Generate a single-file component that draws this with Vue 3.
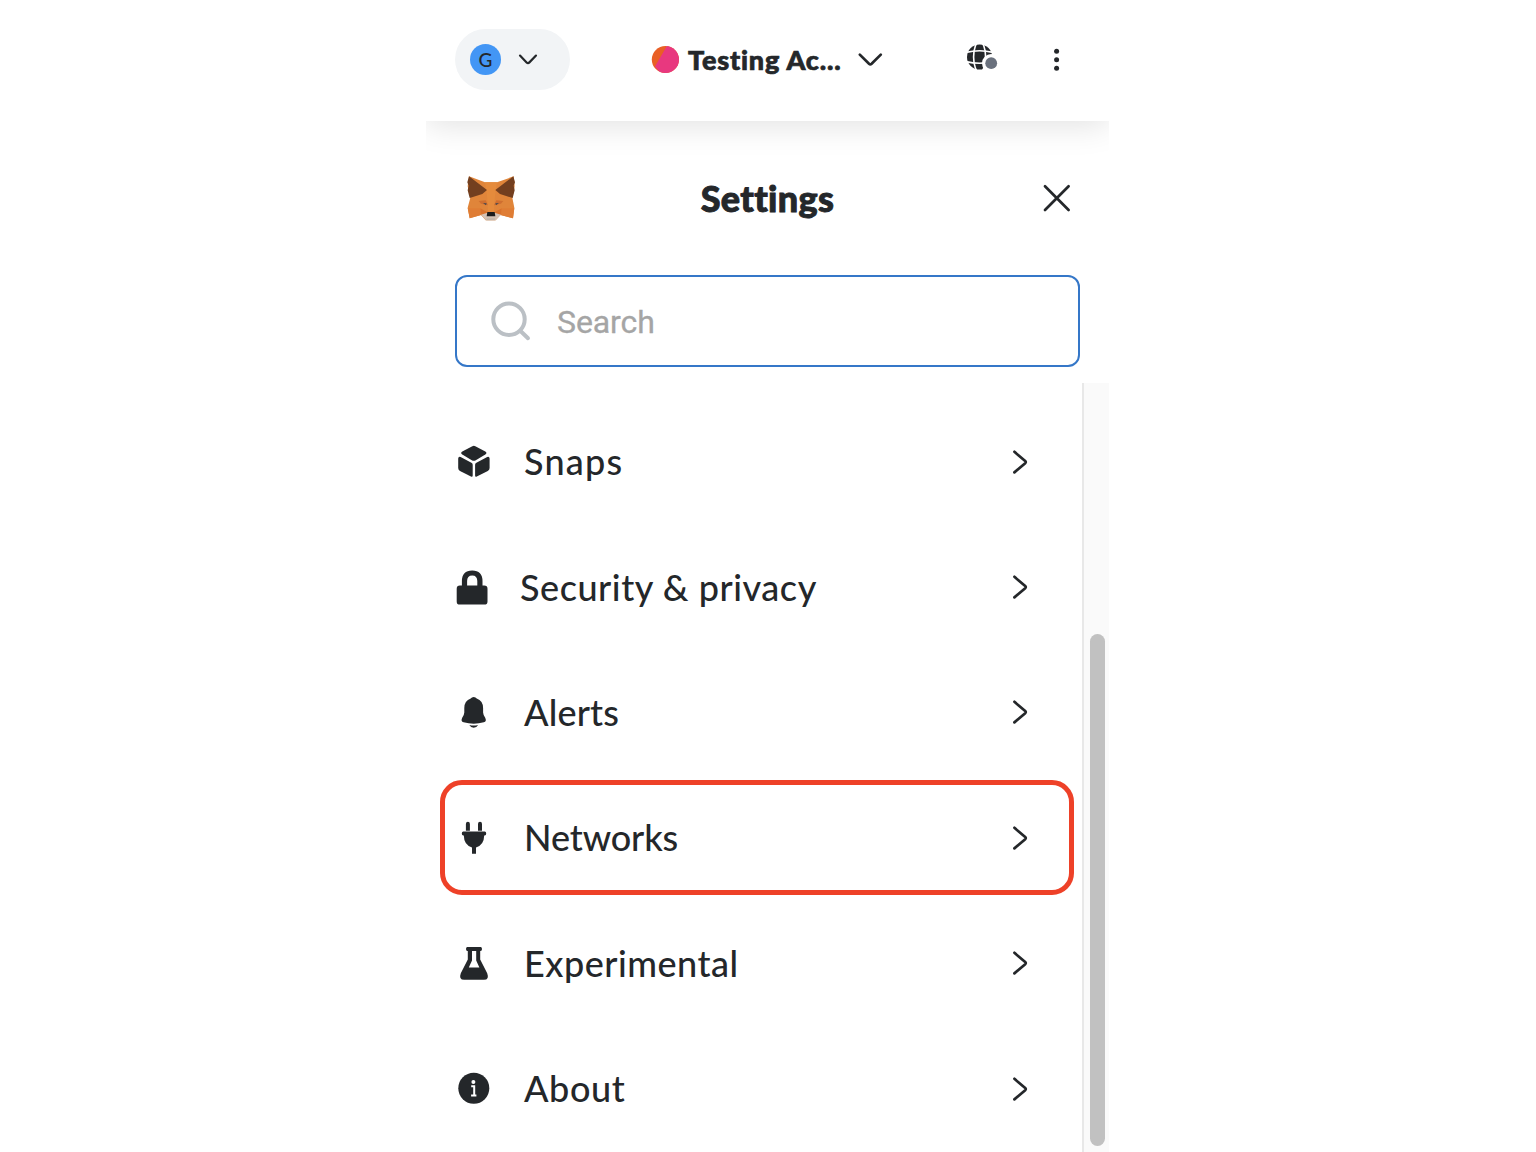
<script setup>
const items = [
  { id: 'snaps', label: 'Snaps' },
  { id: 'security', label: 'Security & privacy' },
  { id: 'alerts', label: 'Alerts' },
  { id: 'networks', label: 'Networks' },
  { id: 'experimental', label: 'Experimental' },
  { id: 'about', label: 'About' },
]
</script>

<template>
  <main class="popup">
    <header class="topbar">
      <button class="network">
        <span class="avatar">G</span>
        <svg class="net-chevron" width="20" height="14" viewBox="0 0 20 14"><path d="M2 2.6 L8.6 9.4 Q10 10.8 11.4 9.4 L18 2.6" /></svg>
      </button>
      <button class="account">
        <svg class="jazzicon" width="28" height="28" viewBox="0 0 28 28">
          <defs><clipPath id="disc"><circle cx="14.4" cy="13.5" r="13.6" /></clipPath></defs>
          <g clip-path="url(#disc)">
            <rect width="28" height="28" fill="#e95f25" />
            <path d="M17 -2 L4 20.5 L12 30 L30 30 L30 -2 Z" fill="#e8387f" />
          </g>
        </svg>
        <span class="account-name">Testing Ac...</span>
        <svg class="acc-chevron" width="26" height="16" viewBox="0 0 26 16"><path d="M2.8 2.6 L12 11.8 Q13.3 13 14.6 11.8 L23.8 2.6" /></svg>
      </button>
      <svg class="globe" width="34" height="30" viewBox="0 0 34 30">
        <circle cx="13.6" cy="14" r="12.6" fill="#24272a" />
        <g fill="none" stroke="#fff" stroke-width="1.6">
          <ellipse cx="13.6" cy="14" rx="6" ry="15.5" />
          <path d="M0 9.4 Q13.6 6 27 9.4 M0 18.6 Q13.6 22 27 18.6" />
        </g>
        <circle cx="25.2" cy="20.2" r="9.2" fill="#fff" />
        <circle cx="25.2" cy="20.2" r="5.9" fill="#6a717d" />
      </svg>
      <svg class="dots" width="8" height="26" viewBox="0 0 8 26" fill="#24272a">
        <circle cx="3.6" cy="4.2" r="2.5" /><circle cx="3.6" cy="12.7" r="2.5" /><circle cx="3.6" cy="21.2" r="2.5" />
      </svg>
    </header>

    <section class="title-row">
      <svg class="fox" width="48" height="46" viewBox="82 44 144 138">
        <path d="M88 48 L136 66 L172 66 L222 48 L225 78 L218 112 L224 142 L220 174 L182 164 L168 180 L138 180 L124 164 L90 174 L84 142 L92 112 L84 78 Z" fill="#e0853a" />
        <path d="M136 66 L172 66 L166 106 L163 154 L145 154 L142 106 Z" fill="#e58b3c" />
        <path d="M88 48 L142 89 L128 101 L90 113 L84 90 L87 76 L83 66 Z M221 48 L167 89 L181 101 L219 113 L225 90 L222 76 L226 66 Z" fill="#733f1f" />
        <path d="M84 144 L122 144 L124 164 L90 174 Z M224 144 L186 144 L184 164 L220 174 Z" fill="#df7d35" />
        <path d="M117 122 L138 120 L145 135 L124 130 Z M191 122 L170 120 L163 135 L184 130 Z" fill="#cf6f30" />
        <path d="M130 128 L141 129 L139 135 Z M178 128 L167 129 L169 135 Z" fill="#4a4a50" />
        <path d="M122 144 L142 155 L140 166 L124 164 Z M186 144 L166 155 L168 166 L184 164 Z" fill="#d9722c" />
        <path d="M124 163 L141 158 L167 158 L184 163 L168 180 L139 180 Z" fill="#d5c2b4" />
        <path d="M143 155 L165 155 L167 168 L141 168 Z" fill="#1c1c1c" />
        <path d="M141 174 L167 174 L166 180 L140 180 Z" fill="#c2b4a8" />
      </svg>
      <h1>Settings</h1>
      <svg class="close" width="30" height="30" viewBox="0 0 30 30"><path d="M3 3.2 L26.6 27 M26.6 3.2 L3 27" /></svg>
    </section>

    <label class="search">
      <svg width="44" height="44" viewBox="0 0 44 44"><circle cx="20" cy="20.3" r="15.7" /><path d="M31.5 32 L39 39.2" /></svg>
      <span>Search</span>
    </label>

    <div class="scroll">
      <nav class="list">
        <a v-for="item in items" :key="item.id" class="item" :class="item.id">
          <span class="icon">
            <svg v-if="item.id === 'snaps'" width="36" height="36" viewBox="0 0 36 36">
              <path d="M16.3 2.2 Q17.8 1.5 19.3 2.2 L29.3 7.5 Q31.6 9 29.3 10.5 L19.4 16.4 Q17.8 17.2 16.2 16.4 L6.3 10.5 Q4 9 6.3 7.5 Z" />
              <path d="M4.6 12.9 L15.4 18.8 Q16.7 19.5 16.7 20.8 V31.4 Q16.7 33.3 15 32.5 L4 27 Q2.2 26 2.2 24 V14.4 Q2.4 12 4.6 12.9 Z" />
              <path d="M31.2 12.9 L20.4 18.8 Q19.1 19.5 19.1 20.8 V31.4 Q19.1 33.3 20.8 32.5 L31.8 27 Q33.6 26 33.6 24 V14.4 Q33.4 12 31.2 12.9 Z" />
            </svg>
            <svg v-else-if="item.id === 'security'" width="36" height="36" viewBox="0 0 36 36">
              <path fill-rule="evenodd" d="M5.9 15.6 V11 Q5.9 .4 16.2 .4 Q26.5 .4 26.5 11 V15.6 H28.2 Q31.5 15.6 31.5 18.8 V31.4 Q31.5 34.6 28.2 34.6 H3.9 Q.7 34.6 .7 31.4 V18.8 Q.7 15.6 3.9 15.6 Z M11.1 15.6 H21.3 V11 Q21.3 5.4 16.2 5.4 Q11.1 5.4 11.1 11 Z" />
            </svg>
            <svg v-else-if="item.id === 'alerts'" width="36" height="36" viewBox="0 0 36 36">
              <path d="M17.7 1.9 Q19.7 1.9 20.7 3.4 Q27.1 5.6 27.1 13 V17.6 Q27.2 20 29.2 22.8 Q31 26.4 27.8 27.3 Q17.7 30.2 7.6 27.3 Q4.4 26.4 6.2 22.8 Q8.2 20 8.3 17.6 V13 Q8.3 5.6 14.7 3.4 Q15.7 1.9 17.7 1.9 Z M13.3 30 Q17.7 31 22.1 30 Q20.7 32.7 17.7 32.7 Q14.7 32.7 13.3 30 Z" />
            </svg>
            <svg v-else-if="item.id === 'networks'" width="36" height="36" viewBox="0 0 36 36">
              <path d="M9.9 10.8 V4 Q9.9 1.8 11.9 1.8 Q13.9 1.8 13.9 4 V10.8 Z M22 10.8 V4 Q22 1.8 24 1.8 Q26 1.8 26 4 V10.8 Z M7.3 11.5 H28.7 Q30.2 11.5 30.2 13.5 Q30.2 15.5 28.7 15.5 H28.2 Q28 25.2 20 27.4 V33.7 H16 V27.4 Q8 25.2 7.8 15.5 H7.3 Q5.8 15.5 5.8 13.5 Q5.8 11.5 7.3 11.5 Z" />
            </svg>
            <svg v-else-if="item.id === 'experimental'" width="36" height="36" viewBox="0 0 36 36">
              <path fill-rule="evenodd" d="M11.4 1.1 H24.6 Q26 1.1 26 3.1 Q26 5 24.6 5 H24.2 V13.6 L31.2 27.2 Q33.6 33.8 28 33.8 H8.2 Q2.4 33.8 4.8 27.2 L11.8 13.6 V5 H11.4 Q10 5 10 3.1 Q10 1.1 11.4 1.1 Z M16 5 V14.6 L12.8 21.6 H23.4 L20.2 14.6 V5 Z" />
            </svg>
            <svg v-else width="36" height="36" viewBox="0 0 36 36">
              <circle cx="17.8" cy="17.3" r="15.5" />
              <circle cx="17.4" cy="11" r="2" fill="#fff" />
              <path d="M15.2 15.3 H18.2 V25 M15.1 24.6 H20.4" fill="none" stroke="#fff" stroke-width="2" />
            </svg>
          </span>
          <span class="label">{{ item.label }}</span>
          <svg class="arrow" width="18" height="28" viewBox="0 0 18 28"><path d="M3.4 3.8 L14.2 13 Q15.4 14.1 14.2 15.2 L3.4 24.4" /></svg>
        </a>
      </nav>
      <div class="track"><div class="thumb"></div></div>
    </div>
  </main>
</template>

<style>
body { background: #fff; overflow: hidden; }
</style>

<style scoped>
.popup {
  display: flex;
  flex-direction: column;
  width: 683px;
  height: 1152px;
  margin-left: 426px;
  overflow: hidden;
  color: #24272a;
  font-family: Lato, "Liberation Sans", sans-serif;
  font-variant-ligatures: none;
}
svg { display: block; flex: none; overflow: visible; }
button { border: 0; padding: 0; background: none; color: inherit; font: inherit; }
.topbar {
  box-sizing: border-box;
  display: flex;
  flex: none;
  align-items: center;
  height: 121px;
  padding: 0 48px 2px 29px;
  box-shadow: 0 4px 31px rgba(0, 0, 0, .12);
}
.network {
  box-sizing: border-box;
  display: flex;
  align-items: center;
  width: 115px;
  height: 61px;
  padding-left: 15px;
  border-radius: 31px;
  background: #f2f4f6;
}
.avatar {
  width: 31px;
  height: 31px;
  border-radius: 50%;
  background: #4396f5;
  font: 500 19px/31px Lato, sans-serif;
  text-align: center;
}
.net-chevron { margin-left: 17px; }
.net-chevron path, .acc-chevron path, .arrow path, .close path {
  fill: none;
  stroke: #24272a;
  stroke-width: 2.2;
  stroke-linecap: round;
}
.account { display: flex; align-items: center; width: 232px; margin-left: 81px; }
.account-name {
  width: 171px;
  margin-left: 9px;
  font-size: 27px;
  font-weight: 900;
  line-height: 32px;
  letter-spacing: .82px;
  text-align: left;
  white-space: nowrap;
  -webkit-text-stroke: .7px #24272a;
}
.acc-chevron { margin-left: -2px; }
.acc-chevron path { stroke-width: 2.7; }
.globe { margin: -4px 0 0 83px; }
.dots { margin-left: auto; margin-right: 0; }
.title-row {
  display: flex;
  align-items: center;
  height: 46px;
  margin: 54px 37px 0 41px;
}
h1 {
  flex: 1;
  margin: 0;
  font-size: 36px;
  font-weight: 900;
  line-height: 46px;
  letter-spacing: .35px;
  text-align: center;
  -webkit-text-stroke: .9px #24272a;
}
.fox { margin-right: -22px; }
.close path { stroke-width: 2.7; }
.search {
  box-sizing: border-box;
  display: flex;
  flex: none;
  align-items: center;
  height: 92px;
  margin: 54px 29px 0;
  padding-left: 32px;
  border: 2px solid #3577c8;
  border-radius: 12px;
  color: #a5a5a5;
  font: 32px/40px Roboto, sans-serif;
}
.search svg { fill: none; stroke: #bbc0c5; stroke-width: 4; stroke-linecap: round; }
.search span { margin: 2px 0 0 24px; letter-spacing: -.1px; -webkit-text-stroke: .3px #a5a5a5; }
.scroll { display: flex; flex: 1; min-height: 0; margin-top: 16px; }
.list { flex: 1; padding-top: 16px; }
.item {
  box-sizing: border-box;
  display: flex;
  align-items: center;
  height: 125.4px;
  padding: 0 53px 0 30px;
}
.icon { width: 36px; margin-top: 1px; fill: #24272a; }
.label {
  flex: 1;
  margin: -1px 0 0 32px;
  font-size: 36px;
  font-weight: 500;
  line-height: 44px;
  letter-spacing: .5px;
  white-space: nowrap;
}
.arrow path { stroke-width: 2.7; }
.snaps .label { letter-spacing: 1.2px; }
.security .label { margin-left: 28px; letter-spacing: .55px; }
.alerts .label { letter-spacing: .2px; }
.networks .label { letter-spacing: -.1px; }
.about .label { letter-spacing: .6px; }
.networks {
  height: 115px;
  margin: 5.2px 8.5px 5.2px 13.5px;
  padding: 0 39.5px 0 11.5px;
  border: 5px solid #ee4128;
  border-radius: 22px;
}
.track {
  box-sizing: border-box;
  width: 27px;
  padding: 251px 4px 6px 5.5px;
  border-left: 2px solid #e8e8e8;
  background: #fafafa;
}
.thumb { width: 15.5px; height: 512px; border-radius: 8px; background: #c1c1c1; }
</style>
